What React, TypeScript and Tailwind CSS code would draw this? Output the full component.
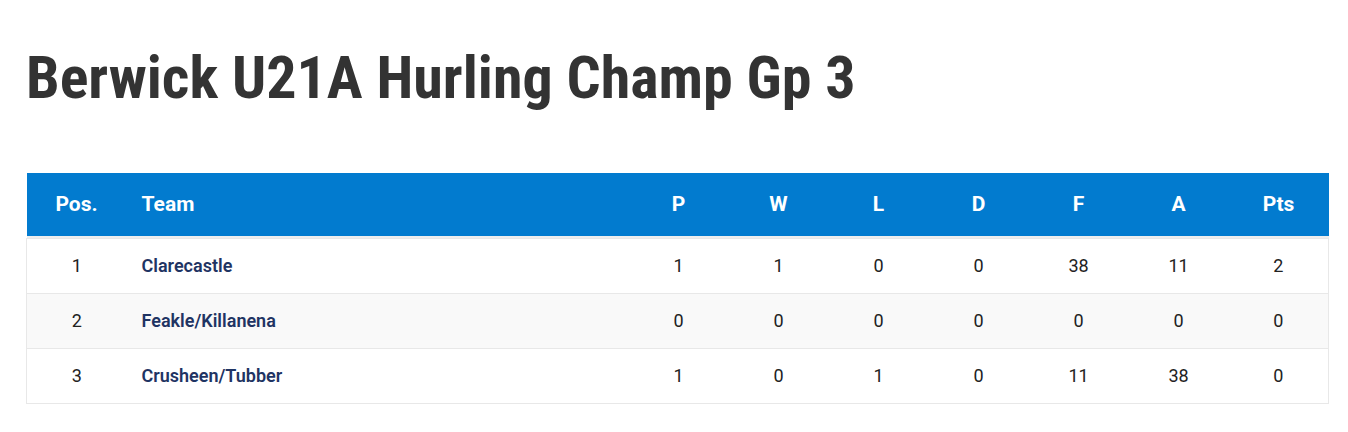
const rows = [
  { pos: 1, team: "Clarecastle", p: 1, w: 1, l: 0, d: 0, f: 38, a: 11, pts: 2 },
  { pos: 2, team: "Feakle/Killanena", p: 0, w: 0, l: 0, d: 0, f: 0, a: 0, pts: 0 },
  { pos: 3, team: "Crusheen/Tubber", p: 1, w: 0, l: 1, d: 0, f: 11, a: 38, pts: 0 },
];

const stats = ["P", "W", "L", "D", "F", "A", "Pts"];

export default function App() {
  return (
    <div className="min-h-[432px] w-full bg-white px-[26px] pt-[42px] font-['Roboto',sans-serif]">
      <h1 className="font-['Roboto_Condensed','Roboto',sans-serif] text-[60px] leading-[72px] font-bold text-[#333333]">
        Berwick U21A Hurling Champ Gp 3
      </h1>

      <table className="mt-[59px] w-[1303px] border-collapse text-[18px]">
        <thead>
          <tr className="h-[63px] bg-[#027bcf] text-white text-[21px] font-bold">
            <th className="w-[100px] text-center font-bold">Pos.</th>
            <th className="pl-[15px] text-left font-bold">Team</th>
            {stats.map((s) => (
              <th key={s} className="w-[100px] text-center font-bold">{s}</th>
            ))}
          </tr>
          <tr className="h-[2px] bg-[#eeeeee]">
            <td colSpan={9} className="p-0"></td>
          </tr>
        </thead>
        <tbody>
          {rows.map((r, i) => (
            <tr
              key={r.pos}
              className={`h-[55px] border border-[#e8e8e8] text-[#222222] ${i === 1 ? "bg-[#f9f9f9]" : "bg-white"}`}
            >
              <td className="text-center">{r.pos}</td>
              <td className="pl-[15px] font-semibold text-[#1f3463]">{r.team}</td>
              <td className="text-center">{r.p}</td>
              <td className="text-center">{r.w}</td>
              <td className="text-center">{r.l}</td>
              <td className="text-center">{r.d}</td>
              <td className="text-center">{r.f}</td>
              <td className="text-center">{r.a}</td>
              <td className="text-center">{r.pts}</td>
            </tr>
          ))}
        </tbody>
      </table>
    </div>
  );
}
